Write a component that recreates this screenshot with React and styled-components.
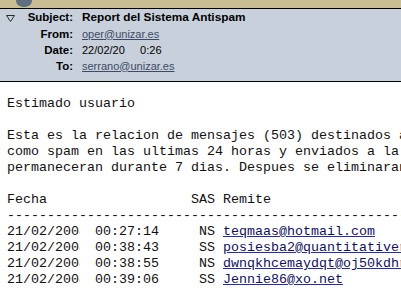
import React from "react";
import styled, { createGlobalStyle } from "styled-components";

const GlobalStyle = createGlobalStyle`
  html, body {
    margin: 0;
    padding: 0;
    background: #ffffff;
  }
  body {
    width: 401px;
    height: 291px;
    overflow: hidden;
  }
`;

const Window = styled.div`
  width: 401px;
  height: 291px;
  overflow: hidden;
  background: #ffffff;
`;

const TopBand = styled.div`
  height: 8px;
  background: #c9bd93;
  border-bottom: 1px solid #000;
  display: flex;
  padding-left: 15px;
  overflow: hidden;
`;

const HeaderPane = styled.div`
  background: #c8d1db;
  border-bottom: 1px solid #000;
  height: 73px;
  box-sizing: border-box;
  display: grid;
  grid-template-columns: 73px 1fr;
  grid-auto-rows: 16px;
  column-gap: 9px;
  align-items: center;
  font-family: "Liberation Sans", Arial, sans-serif;
  font-size: 11px;
  color: #000;
  position: relative;
`;

const Label = styled.div`
  font-weight: bold;
  text-align: right;
  font-size: 11.5px;
  margin-top: ${(p) => (p.$first ? "0" : "1px")};
`;

const Value = styled.div`
  font-weight: ${(p) => (p.$bold ? "bold" : "normal")};
  font-size: ${(p) => (p.$bold ? "11.8px" : "11px")};
  white-space: nowrap;
  margin-top: ${(p) => (p.$first ? "0" : "1px")};
`;

const HeaderLink = styled.a`
  color: #3c4a66;
  text-decoration: underline;
`;

const Toggle = styled.svg`
  position: absolute;
  left: 6px;
  top: 6px;
`;

const Body = styled.div`
  padding: 14px 0 0 7px;
  font-family: "Liberation Mono", "Courier New", monospace;
  font-size: 13.33px;
  line-height: 16px;
  color: #111;
  white-space: pre;
  overflow: hidden;
`;

const Line = styled.div`
  height: 16px;
`;

const Row = styled.div`
  display: grid;
  grid-template-columns: 88px 96px 32px 1fr;
  height: 16px;
`;

const DateCell = styled.div`
  width: 73px;
  overflow: hidden;
`;

const SasCell = styled.div`
  text-align: ${(p) => (p.$head ? "left" : "right")};
  padding-right: ${(p) => (p.$head ? "0" : "8px")};
`;

const Mail = styled.a`
  color: #10105e;
  text-decoration: underline;
  text-decoration-color: #2a2ab0;
`;

const rows = [
  ["21/02/2008", "00:27:14", "NS", "teqmaas@hotmail.com"],
  ["21/02/2008", "00:38:43", "SS", "posiesba2@quantitativeresearch.com"],
  ["21/02/2008", "00:38:55", "NS", "dwnqkhcemaydqt@oj50kdhr.com"],
  ["21/02/2008", "00:39:06", "SS", "Jennie86@xo.net"],
];

export default function App() {
  return (
    <Window>
      <GlobalStyle />
      <TopBand>
        <svg width="18" height="8" viewBox="0 0 18 8">
          <path d="M1 0 C1 5 5 7 9 7 C13 7 17 5 17 0 Z" fill="#5f6f80" />
        </svg>
      </TopBand>
      <HeaderPane>
        <Toggle width="9" height="7" viewBox="0 0 9 7">
          <path d="M0.5 0.5 L8.5 0.5 L4.5 6.5 Z" fill="none" stroke="#2a2a2a" strokeWidth="1" />
        </Toggle>
        <Label $first>Subject:</Label>
        <Value $first $bold>Report del Sistema Antispam</Value>
        <Label>From:</Label>
        <Value><HeaderLink href="#">oper@unizar.es</HeaderLink></Value>
        <Label>Date:</Label>
        <Value>22/02/20&nbsp;&nbsp;&nbsp;&nbsp;&nbsp;0:26</Value>
        <Label>To:</Label>
        <Value><HeaderLink href="#">serrano@unizar.es</HeaderLink></Value>
      </HeaderPane>
      <Body>
        <Line>Estimado usuario</Line>
        <Line />
        <Line>Esta es la relacion de mensajes (503) destinados a usted que han sido clasificados</Line>
        <Line>como spam en las ultimas 24 horas y enviados a la carpeta de cuarentena.</Line>
        <Line>permaneceran durante 7 dias. Despues se eliminaran automaticamente.</Line>
        <Line />
        <Row>
          <DateCell>Fecha</DateCell>
          <div />
          <SasCell $head>SAS</SasCell>
          <div>Remite</div>
        </Row>
        <Line>{"-".repeat(60)}</Line>
        {rows.map((r) => (
          <Row key={r[1]}>
            <DateCell>{r[0]}</DateCell>
            <div>{r[1]}</div>
            <SasCell>{r[2]}</SasCell>
            <div><Mail href="#">{r[3]}</Mail></div>
          </Row>
        ))}
      </Body>
    </Window>
  );
}
